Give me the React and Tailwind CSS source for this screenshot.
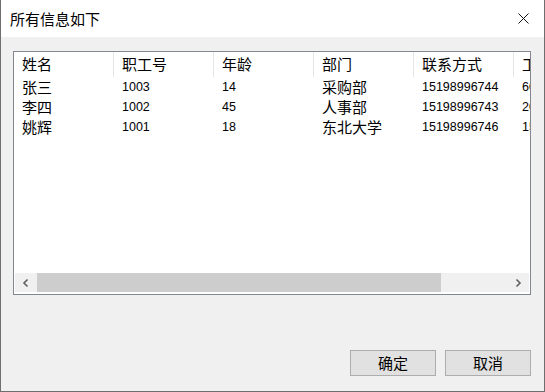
import { useState } from "react";

const cjk = "font-['Noto_Sans_CJK_SC','Noto_Sans',sans-serif]";
const num = "font-['Liberation_Sans','Noto_Sans_CJK_SC',sans-serif]";

const columnas = ["姓名", "职工号", "年龄", "部门", "联系方式", "工资"];

const filas = [
  ["张三", "1003", "14", "采购部", "15198996744", "6000"],
  ["李四", "1002", "45", "人事部", "15198996743", "2000"],
  ["姚辉", "1001", "18", "东北大学", "15198996746", "1500"],
];

// columnas numéricas usan la fuente pequeña
const esNumero = (i) => i === 1 || i === 2 || i === 4 || i === 5;

function Chevron({ dir }) {
  return (
    <svg width="8" height="10" viewBox="0 0 8 10" className="text-[#606060]">
      {dir === "left" ? (
        <path d="M5.5 1.5 L2 5 L5.5 8.5" fill="none" stroke="currentColor" strokeWidth="1.6" />
      ) : (
        <path d="M2.5 1.5 L6 5 L2.5 8.5" fill="none" stroke="currentColor" strokeWidth="1.6" />
      )}
    </svg>
  );
}

export default function App() {
  const [abierto, setAbierto] = useState(true);

  return (
    <div className={`w-[545px] h-[392px] flex flex-col bg-[#f0f0f0] border-x border-b border-[#6e6e6e] ${cjk}`}>
      {/* Barra de título */}
      <div className="h-[37px] bg-white flex items-center justify-between pl-[9px] pr-[15px] shrink-0">
        <span className="text-[15px] text-black leading-none">所有信息如下</span>
        <svg width="11" height="11" viewBox="0 0 11 11" onClick={() => setAbierto(!abierto)}>
          <path d="M0.5 0.5 L10.5 10.5 M10.5 0.5 L0.5 10.5" stroke="#111" strokeWidth="1" />
        </svg>
      </div>

      {/* Contenido */}
      <div className="flex-1 flex flex-col pt-[14px] pl-[12px] pr-[12px]">
        <div className="w-[518px] h-[244px] border border-[#828790] bg-white flex flex-col overflow-hidden">
          <div className="flex-1 overflow-hidden">
            <div className="flex h-[25px]">
              {columnas.map((c) => (
                <div
                  key={c}
                  className="w-[100px] shrink-0 border-r border-[#e5e5e5] pl-[8px] flex items-center text-[15px] text-black"
                >
                  {c}
                </div>
              ))}
            </div>
            {filas.map((f, i) => (
              <div key={i} className="flex h-[20px]">
                {f.map((v, j) => (
                  <div
                    key={j}
                    className={`w-[100px] shrink-0 pl-[8px] flex items-center text-black ${
                      esNumero(j) ? `${num} text-[12.5px]` : "text-[15px]"
                    }`}
                  >
                    {v}
                  </div>
                ))}
              </div>
            ))}
          </div>

          {/* Barra de desplazamiento */}
          <div className="h-[19px] mx-[1px] mb-[2px] bg-[#f0f0f0] flex items-center">
            <div className="w-[22px] h-full flex items-center justify-center">
              <Chevron dir="left" />
            </div>
            <div className="w-[404px] h-full bg-[#cdcdcd]" />
            <div className="flex-1" />
            <div className="w-[22px] h-full flex items-center justify-center">
              <Chevron dir="right" />
            </div>
          </div>
        </div>

        {/* Botones */}
        <div className="flex justify-end gap-[9px] mt-[55px] pr-[1px]">
          <button className="w-[86px] h-[26px] bg-[#e1e1e1] border border-[#adadad] text-[15px] text-black">
            确定
          </button>
          <button className="w-[86px] h-[26px] bg-[#e1e1e1] border border-[#adadad] text-[15px] text-black">
            取消
          </button>
        </div>
      </div>
    </div>
  );
}
